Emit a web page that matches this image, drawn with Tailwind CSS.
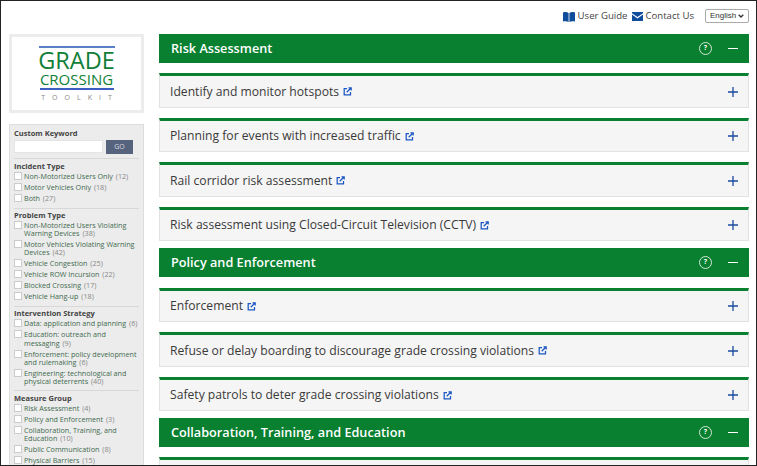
<!DOCTYPE html>
<html lang="en">
<head>
<meta charset="UTF-8">
<title>Grade Crossing Toolkit</title>
<script src="https://cdn.jsdelivr.net/npm/@tailwindcss/browser@4"></script>
</head>
<body class="bg-white font-['Open_Sans',sans-serif] text-[#333]">
<div class="h-[466px] w-[757px] overflow-hidden border border-[#222] flex flex-col">
  <!-- Top links -->
  <div class="h-[33px] flex-none flex justify-end items-start pt-[8px] pr-[7px] text-[#444]">
    <a class="flex items-center text-[9.6px] h-[15px] mr-[4px]">
      <svg class="w-[12px] h-[10px] mr-[2.5px]" viewBox="0 0 12 10"><path fill="#0f4c9c" d="M0 0.5c2-.6 4-.6 5.6.4V10C4 9 2 9 0 9.5zM12 0.5c-2-.6-4-.6-5.6.4V10C8 9 10 9 12 9.5z"/></svg>
      User Guide
    </a>
    <a class="flex items-center text-[9.6px] h-[15px] ml-[1px] mr-[11px]">
      <svg class="w-[11px] h-[9px] mr-[2px]" viewBox="0 0 11 9"><path fill="#0f4c9c" d="M0 0h11v1.2L5.5 5 0 1.2zM0 2.6 5.5 6.4 11 2.6V9H0z"/></svg>
      Contact Us
    </a>
    <div class="w-[44px] h-[14px] border border-[#aaa] rounded-[2px] text-[8px] text-[#333] flex items-center justify-between px-[4px] font-['Liberation_Sans',sans-serif]">
      English
      <svg class="w-[6px] h-[4px]" viewBox="0 0 6 4"><path d="M.7.7 3 3 5.3.7" fill="none" stroke="#333" stroke-width="1.3"/></svg>
    </div>
  </div>

  <div class="flex flex-1 min-h-0 pl-[8px] pr-[7px]">
    <!-- Sidebar -->
    <aside class="w-[135px] flex-none mr-[15px]">
      <div class="h-[79px] border-[3px] border-[#ececec] flex flex-col items-center pt-[9px] mb-[11px]">
        <div class="w-[76px] h-[1.5px] bg-[#5b7fc7]"></div>
        <div class="text-[#127f38] text-[23.5px] leading-[20px] mt-[2px]">GRADE</div>
        <div class="text-[#127f38] text-[15px] leading-[17px] mt-[1.5px]">CROSSING</div>
        <div class="w-[74px] h-[1.5px] bg-[#3a5fc0]"></div>
        <div class="text-[#888] text-[7px] leading-[10px] mt-[3px] tracking-[7px] pl-[7px]">TOOLKIT</div>
      </div>

      <div class="bg-[#ececec] border border-[#ddd] px-[4px] pt-[3px] h-[400px] text-[7.2px] leading-[8.2px] text-[#3f6b4f]">
        <div class="font-bold text-[#444] text-[7.5px] leading-[10px]">Custom Keyword</div>
        <div class="flex mt-[2px]">
          <div class="w-[89px] h-[13px] bg-white border border-[#e4e4e4]"></div>
          <div class="w-[27px] h-[14px] ml-[3px] bg-[#56637c] text-[#d8dce4] text-[7px] flex items-center justify-center">GO</div>
        </div>

        <div class="border-t border-[#d8d8d8] mt-[4px] pt-[1.5px] pb-[3px]">
          <div class="font-bold text-[#444] text-[7.5px] leading-[10px] mb-[1px]">Incident Type</div>
          <div class="flex mb-[2.8px]"><span class="w-[8px] h-[8px] mr-[2px] flex-none bg-white border border-[#ccc]"></span><span>Non-Motorized Users Only <span class="text-[#888] ml-[1px]">(12)</span></span></div>
          <div class="flex mb-[2.8px]"><span class="w-[8px] h-[8px] mr-[2px] flex-none bg-white border border-[#ccc]"></span><span>Motor Vehicles Only <span class="text-[#888] ml-[1px]">(18)</span></span></div>
          <div class="flex mb-[2.8px]"><span class="w-[8px] h-[8px] mr-[2px] flex-none bg-white border border-[#ccc]"></span><span>Both <span class="text-[#888] ml-[1px]">(27)</span></span></div>
        </div>

        <div class="border-t border-[#d8d8d8] pt-[1.5px] pb-[2.5px]">
          <div class="font-bold text-[#444] text-[7.5px] leading-[10px] mb-[1px]">Problem Type</div>
          <div class="flex mb-[2.8px]"><span class="w-[8px] h-[8px] mr-[2px] flex-none bg-white border border-[#ccc]"></span><span>Non-Motorized Users Violating Warning Devices <span class="text-[#888] ml-[1px]">(38)</span></span></div>
          <div class="flex mb-[2.8px]"><span class="w-[8px] h-[8px] mr-[2px] flex-none bg-white border border-[#ccc]"></span><span>Motor Vehicles Violating Warning Devices <span class="text-[#888] ml-[1px]">(42)</span></span></div>
          <div class="flex mb-[2.8px]"><span class="w-[8px] h-[8px] mr-[2px] flex-none bg-white border border-[#ccc]"></span><span>Vehicle Congestion <span class="text-[#888] ml-[1px]">(25)</span></span></div>
          <div class="flex mb-[2.8px]"><span class="w-[8px] h-[8px] mr-[2px] flex-none bg-white border border-[#ccc]"></span><span>Vehicle ROW Incursion <span class="text-[#888] ml-[1px]">(22)</span></span></div>
          <div class="flex mb-[2.8px]"><span class="w-[8px] h-[8px] mr-[2px] flex-none bg-white border border-[#ccc]"></span><span>Blocked Crossing <span class="text-[#888] ml-[1px]">(17)</span></span></div>
          <div class="flex mb-[2.8px]"><span class="w-[8px] h-[8px] mr-[2px] flex-none bg-white border border-[#ccc]"></span><span>Vehicle Hang-up <span class="text-[#888] ml-[1px]">(18)</span></span></div>
        </div>

        <div class="border-t border-[#d8d8d8] pt-[1.5px] pb-[2px]">
          <div class="font-bold text-[#444] text-[7.5px] leading-[10px] mb-[1px]">Intervention Strategy</div>
          <div class="flex mb-[2.8px]"><span class="w-[8px] h-[8px] mr-[2px] flex-none bg-white border border-[#ccc]"></span><span>Data: application and planning <span class="text-[#888] ml-[1px]">(6)</span></span></div>
          <div class="flex mb-[2.8px]"><span class="w-[8px] h-[8px] mr-[2px] flex-none bg-white border border-[#ccc]"></span><span>Education: outreach and messaging <span class="text-[#888] ml-[1px]">(9)</span></span></div>
          <div class="flex mb-[2.8px]"><span class="w-[8px] h-[8px] mr-[2px] flex-none bg-white border border-[#ccc]"></span><span>Enforcement: policy development and rulemaking <span class="text-[#888] ml-[1px]">(6)</span></span></div>
          <div class="flex mb-[2.8px]"><span class="w-[8px] h-[8px] mr-[2px] flex-none bg-white border border-[#ccc]"></span><span>Engineering: technological and physical deterrents <span class="text-[#888] ml-[1px]">(40)</span></span></div>
        </div>

        <div class="border-t border-[#d8d8d8] pt-[1.5px] pb-[3px]">
          <div class="font-bold text-[#444] text-[7.5px] leading-[10px] mb-[1px]">Measure Group</div>
          <div class="flex mb-[2.8px]"><span class="w-[8px] h-[8px] mr-[2px] flex-none bg-white border border-[#ccc]"></span><span>Risk Assessment <span class="text-[#888] ml-[1px]">(4)</span></span></div>
          <div class="flex mb-[2.8px]"><span class="w-[8px] h-[8px] mr-[2px] flex-none bg-white border border-[#ccc]"></span><span>Policy and Enforcement <span class="text-[#888] ml-[1px]">(3)</span></span></div>
          <div class="flex mb-[2.8px]"><span class="w-[8px] h-[8px] mr-[2px] flex-none bg-white border border-[#ccc]"></span><span>Collaboration, Training, and Education <span class="text-[#888] ml-[1px]">(10)</span></span></div>
          <div class="flex mb-[2.8px]"><span class="w-[8px] h-[8px] mr-[2px] flex-none bg-white border border-[#ccc]"></span><span>Public Communication <span class="text-[#888] ml-[1px]">(8)</span></span></div>
          <div class="flex mb-[2.8px]"><span class="w-[8px] h-[8px] mr-[2px] flex-none bg-white border border-[#ccc]"></span><span>Physical Barriers <span class="text-[#888] ml-[1px]">(15)</span></span></div>
        </div>
      </div>
    </aside>

    <!-- Accordion -->
    <main class="flex-1 min-w-0">
      <div class="h-[29px] bg-[#08802f] text-white font-semibold text-[12.7px] flex items-center pl-[12px] mb-[10px]">
        <span class="flex-1">Risk Assessment</span>
        <span class="w-[13px] h-[13px] rounded-full border border-[#d5e8da] text-[7px] font-bold flex items-center justify-center">?</span>
        <span class="w-[10px] h-[1.5px] bg-white ml-[16px] mr-[11px]"></span>
      </div>
      <div class="flex flex-col gap-[10px] mb-[7px]">
        <div class="h-[34.5px] bg-[#f5f5f5] border border-[#e2e2e2] border-t-[3px] border-t-[#08802f] flex items-center pl-[10px] pt-[1px] text-[12.15px] text-[#3a3a3a]">
          <span class="flex-1 flex items-center">Identify and monitor hotspots<svg class="w-[9px] h-[9px] ml-[4px]" viewBox="0 0 9 9"><path d="M4 1.5H1.2v6.3h6.3V5M3.7 5.3 8 1M5.5.8h2.7v2.7" fill="none" stroke="#1a56c4" stroke-width="1.25"/></svg></span>
          <svg class="w-[10px] h-[10px] mr-[10px]" viewBox="0 0 10 10"><path d="M5 0v10M0 5h10" stroke="#1a4a9f" stroke-width="1.3"/></svg>
        </div>
        <div class="h-[34.5px] bg-[#f5f5f5] border border-[#e2e2e2] border-t-[3px] border-t-[#08802f] flex items-center pl-[10px] pt-[1px] text-[12.15px] text-[#3a3a3a]">
          <span class="flex-1 flex items-center">Planning for events with increased traffic<svg class="w-[9px] h-[9px] ml-[4px]" viewBox="0 0 9 9"><path d="M4 1.5H1.2v6.3h6.3V5M3.7 5.3 8 1M5.5.8h2.7v2.7" fill="none" stroke="#1a56c4" stroke-width="1.25"/></svg></span>
          <svg class="w-[10px] h-[10px] mr-[10px]" viewBox="0 0 10 10"><path d="M5 0v10M0 5h10" stroke="#1a4a9f" stroke-width="1.3"/></svg>
        </div>
        <div class="h-[34.5px] bg-[#f5f5f5] border border-[#e2e2e2] border-t-[3px] border-t-[#08802f] flex items-center pl-[10px] pt-[1px] text-[12.15px] text-[#3a3a3a]">
          <span class="flex-1 flex items-center">Rail corridor risk assessment<svg class="w-[9px] h-[9px] ml-[4px]" viewBox="0 0 9 9"><path d="M4 1.5H1.2v6.3h6.3V5M3.7 5.3 8 1M5.5.8h2.7v2.7" fill="none" stroke="#1a56c4" stroke-width="1.25"/></svg></span>
          <svg class="w-[10px] h-[10px] mr-[10px]" viewBox="0 0 10 10"><path d="M5 0v10M0 5h10" stroke="#1a4a9f" stroke-width="1.3"/></svg>
        </div>
        <div class="h-[34.5px] bg-[#f5f5f5] border border-[#e2e2e2] border-t-[3px] border-t-[#08802f] flex items-center pl-[10px] pt-[1px] text-[12.15px] text-[#3a3a3a]">
          <span class="flex-1 flex items-center">Risk assessment using Closed-Circuit Television (CCTV)<svg class="w-[9px] h-[9px] ml-[4px]" viewBox="0 0 9 9"><path d="M4 1.5H1.2v6.3h6.3V5M3.7 5.3 8 1M5.5.8h2.7v2.7" fill="none" stroke="#1a56c4" stroke-width="1.25"/></svg></span>
          <svg class="w-[10px] h-[10px] mr-[10px]" viewBox="0 0 10 10"><path d="M5 0v10M0 5h10" stroke="#1a4a9f" stroke-width="1.3"/></svg>
        </div>
      </div>

      <div class="h-[29px] bg-[#08802f] text-white font-semibold text-[12.7px] flex items-center pl-[12px] mb-[10.5px]">
        <span class="flex-1">Policy and Enforcement</span>
        <span class="w-[13px] h-[13px] rounded-full border border-[#d5e8da] text-[7px] font-bold flex items-center justify-center">?</span>
        <span class="w-[10px] h-[1.5px] bg-white ml-[16px] mr-[11px]"></span>
      </div>
      <div class="flex flex-col gap-[10px] mb-[6.5px]">
        <div class="h-[34.5px] bg-[#f5f5f5] border border-[#e2e2e2] border-t-[3px] border-t-[#08802f] flex items-center pl-[10px] pt-[1px] text-[12.15px] text-[#3a3a3a]">
          <span class="flex-1 flex items-center">Enforcement<svg class="w-[9px] h-[9px] ml-[4px]" viewBox="0 0 9 9"><path d="M4 1.5H1.2v6.3h6.3V5M3.7 5.3 8 1M5.5.8h2.7v2.7" fill="none" stroke="#1a56c4" stroke-width="1.25"/></svg></span>
          <svg class="w-[10px] h-[10px] mr-[10px]" viewBox="0 0 10 10"><path d="M5 0v10M0 5h10" stroke="#1a4a9f" stroke-width="1.3"/></svg>
        </div>
        <div class="h-[34.5px] bg-[#f5f5f5] border border-[#e2e2e2] border-t-[3px] border-t-[#08802f] flex items-center pl-[10px] pt-[1px] text-[12.15px] text-[#3a3a3a]">
          <span class="flex-1 flex items-center">Refuse or delay boarding to discourage grade crossing violations<svg class="w-[9px] h-[9px] ml-[4px]" viewBox="0 0 9 9"><path d="M4 1.5H1.2v6.3h6.3V5M3.7 5.3 8 1M5.5.8h2.7v2.7" fill="none" stroke="#1a56c4" stroke-width="1.25"/></svg></span>
          <svg class="w-[10px] h-[10px] mr-[10px]" viewBox="0 0 10 10"><path d="M5 0v10M0 5h10" stroke="#1a4a9f" stroke-width="1.3"/></svg>
        </div>
        <div class="h-[34.5px] bg-[#f5f5f5] border border-[#e2e2e2] border-t-[3px] border-t-[#08802f] flex items-center pl-[10px] pt-[1px] text-[12.15px] text-[#3a3a3a]">
          <span class="flex-1 flex items-center">Safety patrols to deter grade crossing violations<svg class="w-[9px] h-[9px] ml-[4px]" viewBox="0 0 9 9"><path d="M4 1.5H1.2v6.3h6.3V5M3.7 5.3 8 1M5.5.8h2.7v2.7" fill="none" stroke="#1a56c4" stroke-width="1.25"/></svg></span>
          <svg class="w-[10px] h-[10px] mr-[10px]" viewBox="0 0 10 10"><path d="M5 0v10M0 5h10" stroke="#1a4a9f" stroke-width="1.3"/></svg>
        </div>
      </div>

      <div class="h-[29px] bg-[#08802f] text-white font-semibold text-[12.7px] flex items-center pl-[12px] pt-[1px] mb-[10.5px]">
        <span class="flex-1">Collaboration, Training, and Education</span>
        <span class="w-[13px] h-[13px] rounded-full border border-[#d5e8da] text-[7px] font-bold flex items-center justify-center">?</span>
        <span class="w-[10px] h-[1.5px] bg-white ml-[16px] mr-[11px]"></span>
      </div>
      <div class="h-[34.5px] bg-[#f5f5f5] border border-[#e2e2e2] border-t-[3px] border-t-[#08802f]"></div>
    </main>
  </div>
</div>
</body>
</html>
